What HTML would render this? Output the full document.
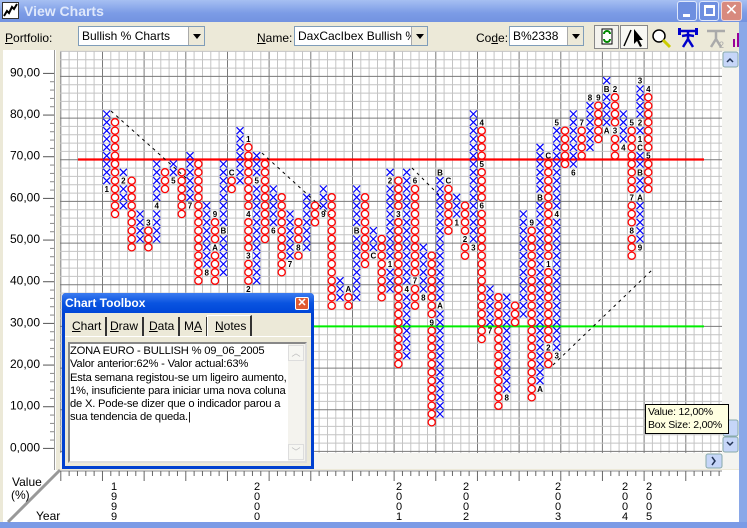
<!DOCTYPE html>
<html><head><meta charset="utf-8"><style>
*{margin:0;padding:0;box-sizing:border-box}
body{width:747px;height:528px;overflow:hidden;background:#ece9d8;font-family:"Liberation Sans",sans-serif;font-size:11px;position:relative}
.abs{position:absolute}
.combo{position:absolute;top:26px;height:20px;background:#fff;border:1px solid #7f9db9;font-size:12px;padding:2px 3px;white-space:nowrap;overflow:hidden}
.combo .b{position:absolute;right:0;top:0;width:16px;height:18px;background:#ece9d8;border-left:1px solid #aaa}
.combo .b:after{content:"";position:absolute;left:4px;top:7px;border:4px solid transparent;border-top:5px solid #000}
.lbl{position:absolute;top:31px;font-size:12px}
.tab{position:absolute;top:317px;height:19px;font-size:12px;padding:2px 4px;border-right:2px solid #333}
</style></head><body>
<div class="abs" style="left:0;top:0;width:747px;height:22px;background:linear-gradient(#a6bff2,#7b9be6 60%,#7393e0)"></div>
<div class="abs" style="left:2px;top:2px;width:17px;height:17px;background:#fff;border:1px solid #333"><svg width="15" height="15"><path d="M1 13 L4 8 L6 10 L9 4 L11 6 L14 1" stroke="#000" stroke-width="2" fill="none"/></svg></div>
<div class="abs" style="left:24px;top:3px;color:#dfe8fb;font-size:14px;font-weight:bold">View Charts</div>
<div class="abs" style="left:677px;top:1px;width:20px;height:20px;background:#6e8fe0;border:1px solid #dfe8fb;border-radius:3px"><div class="abs" style="left:5px;top:12px;width:7px;height:3px;background:#fff"></div></div>
<div class="abs" style="left:699px;top:1px;width:20px;height:20px;background:#6e8fe0;border:1px solid #dfe8fb;border-radius:3px"><div class="abs" style="left:4px;top:3px;width:11px;height:11px;border:2px solid #fff;border-top-width:3px"></div></div>
<div class="abs" style="left:721px;top:1px;width:21px;height:20px;background:#d88a7e;border:1px solid #f0d8d8;border-radius:3px;color:#fff;font-size:16px;text-align:center;line-height:18px">✕</div>
<div class="lbl" style="left:5px"><u>P</u>ortfolio:</div>
<div class="combo" style="left:78px;width:127px">Bullish % Charts<div class="b"></div></div>
<div class="lbl" style="left:257px"><u>N</u>ame:</div>
<div class="combo" style="left:294px;width:134px">DaxCacIbex Bullish % I<div class="b"></div></div>
<div class="lbl" style="left:476px">Co<u>d</u>e:</div>
<div class="combo" style="left:509px;width:75px">B%2338<div class="b"></div></div>
<div class="abs" style="left:594px;top:25px;width:25px;height:24px;border:1px solid #888;background:#f4f3ee"><svg width="23" height="22"><rect x="7" y="3" width="10" height="15" fill="#fff" stroke="#000"/><path d="M9 8 a3 3 0 0 1 6 0 M15 13 a3 3 0 0 1 -6 0" stroke="#080" stroke-width="2" fill="none"/></svg></div>
<div class="abs" style="left:620px;top:25px;width:28px;height:24px;border:1px solid #888;background:#f8f8f4"><svg width="26" height="22"><path d="M3 20 L10 4" stroke="#000" stroke-width="1.5"/><path d="M13 3 L13 18 L16 15 L19 21 L21 20 L18 14 L22 14 Z" fill="#000"/></svg></div>
<div class="abs" style="left:650px;top:27px"><svg width="24" height="22"><circle cx="9" cy="9" r="6" fill="#fff" stroke="#000" stroke-width="1.5"/><path d="M13 13 L20 20" stroke="#cc0" stroke-width="3"/></svg></div>
<div class="abs" style="left:676px;top:27px"><svg width="24" height="22"><path d="M3 4 H21 M12 4 V12 M12 12 L7 20 M12 12 L17 20 M6 9 L12 8 L18 9" stroke="#00c" stroke-width="2.5" fill="none"/><rect x="2" y="1" width="3" height="7" fill="#00c"/><rect x="19" y="1" width="3" height="7" fill="#00c"/></svg></div>
<div class="abs" style="left:704px;top:27px;color:#aaa"><svg width="24" height="22"><path d="M3 4 H21 M12 4 V12 M12 12 L7 20 M12 12 L17 20" stroke="#aaa" stroke-width="2.5" fill="none"/><text x="15" y="21" font-size="9" fill="#aaa" font-family="Liberation Sans">2</text></svg></div>
<div class="abs" style="left:731px;top:29px"><svg width="16" height="20"><rect x="2" y="10" width="2" height="8" fill="#909"/><rect x="6" y="4" width="2" height="14" fill="#909"/><rect x="10" y="8" width="2" height="10" fill="#909"/><rect x="14" y="2" width="2" height="16" fill="#909"/></svg></div>
<div class="abs" style="left:3px;top:50px;width:52px;height:420px;background:#fff;border-right:1px solid #999"></div>
<div class="abs" style="left:55px;top:50px;width:5px;height:420px;background:#ece9d8;border-left:1px solid #fff"></div>
<svg class="abs" style="left:0;top:0" width="747" height="528" id="main"></svg>
<div class="abs" style="left:62px;top:293px;width:252px;height:176px;background:#0040d0;border-radius:4px 4px 0 0"></div>
<div class="abs" style="left:62px;top:293px;width:252px;height:20px;background:linear-gradient(#3d7cf0,#0a54e0 50%,#0046d8);border-radius:4px 4px 0 0"></div>
<div class="abs" style="left:65px;top:296px;color:#fff;font-weight:bold;font-size:12px">Chart Toolbox</div>
<div class="abs" style="left:295px;top:297px;width:14px;height:13px;background:#e05a30;border:1px solid #fff;border-radius:2px;color:#fff;font-size:11px;line-height:11px;text-align:center;font-weight:bold">✕</div>
<div class="abs" style="left:65px;top:313px;width:246px;height:153px;background:#ece9d8"></div>
<div class="tab" style="left:68px"><u>C</u>hart</div>
<div class="tab" style="left:106px"><u>D</u>raw</div>
<div class="tab" style="left:145px"><u>D</u>ata</div>
<div class="tab" style="left:180px">M<u>A</u></div>
<div class="abs" style="left:207px;top:315px;width:45px;height:22px;background:#ece9d8;border-right:2px solid #333;border-left:1px solid #fff;border-top:1px solid #fff;font-size:12px;padding:3px 7px"><u>N</u>otes</div>
<div class="abs" style="left:65px;top:336px;width:246px;height:1px;background:#fff"></div>
<div class="abs" style="left:68px;top:342px;width:239px;height:121px;background:#fff;border:2px solid #888;border-right-color:#ddd;border-bottom-color:#ddd"></div>
<div class="abs" style="left:70px;top:345px;font-size:11.2px;line-height:13.3px;white-space:nowrap;letter-spacing:-0.2px;color:#000">ZONA EURO - BULLISH % 09_06_2005<br>Valor anterior:62% - Valor actual:63%<br>Esta semana registou-se um ligeiro aumento,<br>1%, insuficiente para iniciar uma nova coluna<br>de X. Pode-se dizer que o indicador parou a<br>sua tendencia de queda.|</div>
<div class="abs" style="left:288px;top:344px;width:17px;height:117px;background:#f4f3ee"></div>
<div class="abs" style="left:288px;top:345px;width:16px;height:16px;border:1px solid #ddd;background:#f6f6f2;color:#bbb;font-size:9px;text-align:center">︿</div>
<div class="abs" style="left:288px;top:444px;width:16px;height:16px;border:1px solid #ddd;background:#f6f6f2;color:#bbb;font-size:9px;text-align:center">﹀</div>
<div class="abs" style="left:645px;top:404px;width:84px;height:30px;background:#ffffe1;border:1px solid #000;font-size:10.5px;line-height:13px;padding:1px 2px;white-space:nowrap;letter-spacing:-0.2px">Value: 12,00%<br>Box Size: 2,00%</div>
<script>
var s='',NS=document.getElementById('main');
function L(x1,y1,x2,y2,c,w,d){s+='<line x1="'+x1+'" y1="'+y1+'" x2="'+x2+'" y2="'+y2+'" stroke="'+c+'" stroke-width="'+(w||1)+'"'+(d?' stroke-dasharray="'+d+'"':'')+'/>';}
s+='<rect x="60" y="51" width="662" height="402" fill="#fff"/>';
for(var j=0;;j++){var x=60.8+8.333*j;if(x>722)break;var maj=Math.abs(((x-102.5)/41.667)-Math.round((x-102.5)/41.667))<0.02;L(x.toFixed(1),51,x.toFixed(1),453,maj?'#7a7a7a':'#c4c4c4');}
for(var v=0;v<=96;v+=2){var y=451.4-4.1667*v;if(y<51)break;L(60,y.toFixed(1),722,y.toFixed(1),v%10==0?'#7a7a7a':'#c4c4c4');}
L(78,159.5,704,159.5,'#ff0000',2.2);L(78,326.4,704,326.4,'#00ee00',2);
L(111,111,186,178,'#000',1,'3 4');L(262,153,330,215,'#000',1,'3 4');L(412,168,440,196,'#000',1,'3 4');L(553,365,652,270,'#000',1,'3 4');
var D=[['X',31,40,{31:'1'}],['O',28,39],['X',29,33,{32:'2'}],['O',24,32],['X',25,28],['O',24,27,{27:'3'}],['X',25,34,{29:'4'}],['O',31,33],['X',32,34,{32:'5'}],['O',28,33],['X',29,35,{29:'7'}],['O',20,34],['X',21,29,{21:'8'}],['O',20,28,{28:'9',24:'A'}],['X',21,34,{26:'B'}],['O',31,33,{33:'C'}],['X',32,38],['O',19,37,{37:'1',28:'4',23:'3',19:'2'}],['X',20,35,{32:'5'}],['O',25,34],['X',26,31,{26:'6'}],['O',21,30],['X',22,28,{22:'7'}],['O',23,27,{24:'8'}],['X',24,30],['O',27,29],['X',28,31,{28:'9'}],['O',17,30],['X',18,20],['O',17,19,{19:'A'}],['X',18,31,{26:'B'}],['O',22,30],['X',23,26,{23:'C'}],['O',18,25],['X',19,33,{32:'2',22:'1'}],['O',10,32,{28:'3'}],['X',11,33,{19:'4'}],['O',17,32,{32:'6',20:'7'}],['X',18,24,{18:'8'}],['O',3,23,{15:'9'}],['X',4,33,{33:'B',17:'A'}],['O',26,32,{32:'C'}],['X',27,30,{27:'1'}],['O',23,29,{25:'2'}],['X',24,40,{24:'3'}],['O',13,39,{39:'4',34:'5',29:'6'}],['X',14,19,{14:'7'}],['O',5,18],['X',6,18,{6:'8'}],['O',15,17],['X',16,28],['O',6,27,{27:'9'}],['X',7,36,{30:'B',7:'A'}],['O',10,35,{35:'C',22:'1',12:'2'}],['X',11,39,{11:'3',28:'4',39:'5'}],['O',34,38],['X',33,40,{33:'6'}],['O',35,39,{39:'7'}],['X',36,42,{42:'8'}],['O',37,42,{42:'9'}],['X',38,44,{43:'B',38:'A'}],['O',35,43,{43:'2',38:'3'}],['X',36,40,{36:'4'}],['O',23,39,{39:'5',30:'7',26:'8'}],['X',24,44,{44:'3',39:'2',37:'1',36:'C',33:'B',30:'A',24:'9'}],['O',31,43,{43:'4',35:'5'}]];
D.forEach(function(c,k){var cx=106.7+8.333*k,lab=c[3]||{};for(var n=c[1];n<=c[2];n++){var cy=114+8.333*(40-n);if(cy>452)continue;if(lab[n]){s+='<text x="'+cx.toFixed(1)+'" y="'+(cy+3).toFixed(1)+'" font-size="8" font-weight="bold" text-anchor="middle" font-family="Liberation Sans">'+lab[n]+'</text>';}else if(c[0]=='X'){s+='<path d="M'+(cx-3.5)+' '+(cy-3.5)+'L'+(cx+3.5)+' '+(cy+3.5)+'M'+(cx+3.5)+' '+(cy-3.5)+'L'+(cx-3.5)+' '+(cy+3.5)+'" stroke="#0000ff" stroke-width="1.2"/>';}else{s+='<circle cx="'+cx.toFixed(1)+'" cy="'+cy.toFixed(1)+'" r="3.6" fill="none" stroke="#ff0000" stroke-width="1.3"/>';}}});
for(var v=0;v<=90;v+=2){var y=451.4-4.1667*v-3;if(v%10==0){L(43,y,54,y,'#555');s+='<text x="40" y="'+(y+3)+'" font-size="12" text-anchor="end" font-family="Liberation Sans">'+(v==0?'0,000':v+',00')+'</text>';}else L(50,y,54,y,'#888');}
s+='<rect x="722" y="51" width="17" height="402" fill="#f4f4f0"/><rect x="723" y="52" width="15" height="15" fill="#c6d6f8" stroke="#8aa" rx="2"/><rect x="723" y="420" width="15" height="16" fill="#c6d6f8" stroke="#8aa" rx="2"/><rect x="723" y="437" width="15" height="15" fill="#c6d6f8" stroke="#8aa" rx="2"/><path d="M727 62l3-3 3 3M727 442l3 3 3-3" stroke="#235" stroke-width="1.5" fill="none"/>';
s+='<rect x="60" y="453" width="679" height="16" fill="#f4f4f0"/><rect x="706" y="454" width="16" height="14" fill="#c6d6f8" stroke="#8aa" rx="2"/><path d="M712 457l3 4-3 4" stroke="#235" stroke-width="1.5" fill="none"/>';
s+='<rect x="739" y="22" width="8" height="506" fill="#8aa8e8"/>';
s+='<rect x="3" y="470" width="736" height="54" fill="#fff"/><rect x="0" y="522" width="747" height="6" fill="#7b9be6"/><path d="M8 522 L60 470" stroke="#999" stroke-width="3"/>';
L(60,471,722,471,'#888');
for(var j=0;;j++){var x=60.8+8.333*j;if(x>722)break;L(x,471,x,(j%5==0?481:476),'#666');}
s+='<text x="12" y="486" font-size="12" font-family="Liberation Sans">Value</text><text x="11" y="499" font-size="12" font-family="Liberation Sans">(%)</text><text x="36" y="520" font-size="12" font-family="Liberation Sans">Year</text>';
[[114,'1999'],[257,'2000'],[399,'2001'],[466,'2002'],[558,'2003'],[625,'2004'],[649,'2005']].forEach(function(a){for(var i=0;i<4;i++)s+='<text x="'+a[0]+'" y="'+(490+i*10)+'" font-size="11" text-anchor="middle" font-family="Liberation Sans">'+a[1][i]+'</text>';});
NS.innerHTML=s;
</script>
</body></html>
